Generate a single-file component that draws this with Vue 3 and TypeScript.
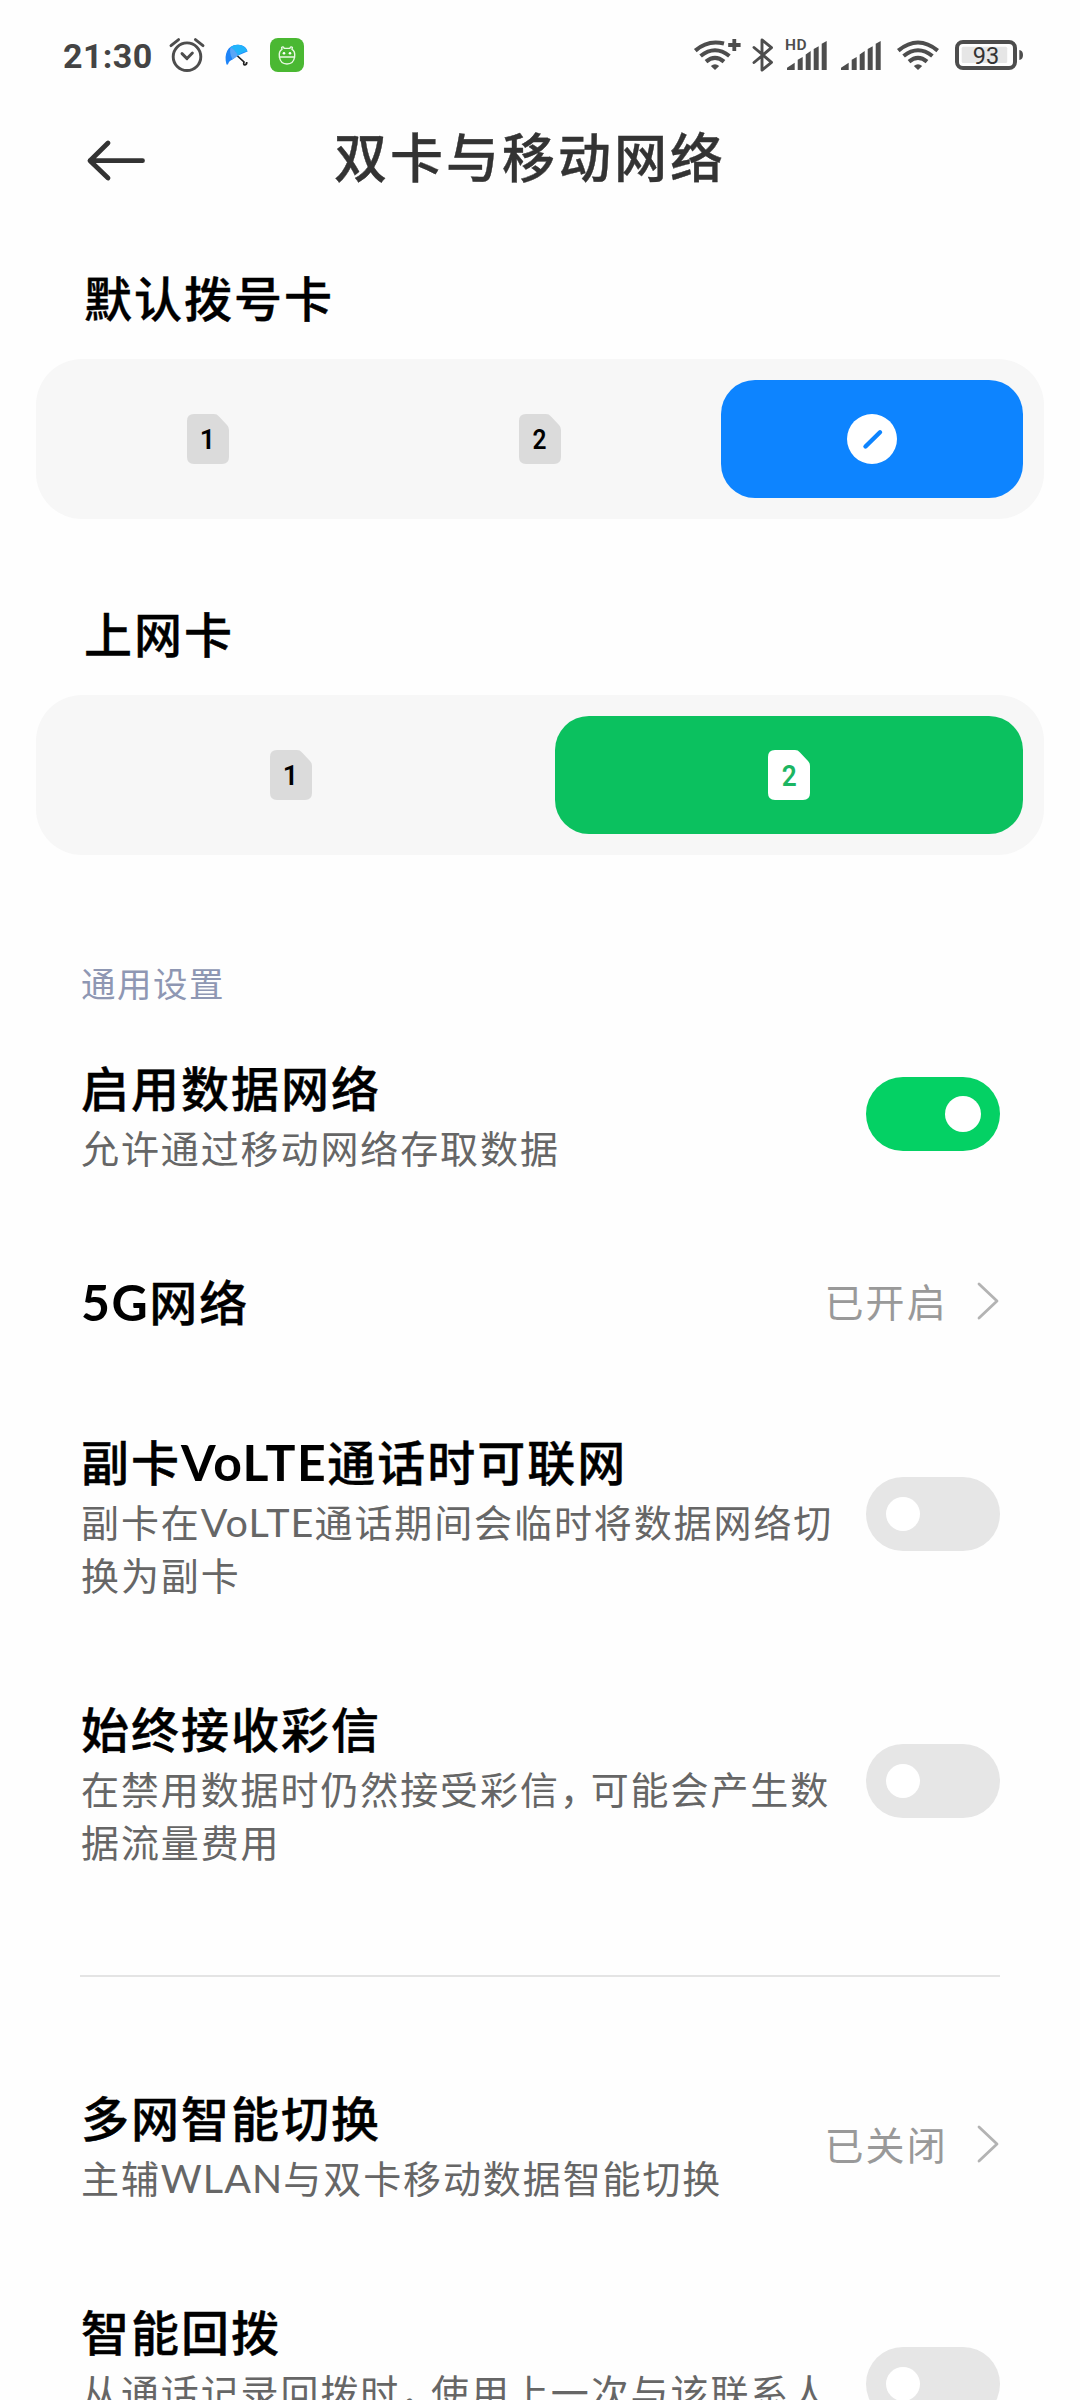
<script setup lang="ts">
import { ref } from 'vue'

interface Row {
  id: string
  title: string
  lines: string[]
  value?: string
  on?: boolean
  tall?: boolean
}

interface Run {
  text: string
  kind: '' | 'latin' | 'comma'
}

const general = ref<Row[]>([
  { id: 'data', title: '启用数据网络', lines: ['允许通过移动网络存取数据'], on: true },
  { id: '5g', title: '5G网络', lines: [], value: '已开启' },
  { id: 'volte', title: '副卡VoLTE通话时可联网', lines: ['副卡在VoLTE通话期间会临时将数据网络切', '换为副卡'], on: false },
  { id: 'mms', title: '始终接收彩信', lines: ['在禁用数据时仍然接受彩信，可能会产生数', '据流量费用'], on: false },
])

const smart = ref<Row[]>([
  { id: 'switch', title: '多网智能切换', lines: ['主辅WLAN与双卡移动数据智能切换'], value: '已关闭' },
  { id: 'callback', title: '智能回拨', lines: ['从通话记录回拨时，使用上一次与该联系人'], on: false, tall: true },
])

const groups = [general, smart]
const simPath = 'M7 0H27Q30 0 32 2.4L40 11Q42 13 42 16V43Q42 50 35 50H7Q0 50 0 43V7Q0 0 7 0Z'
const bars = ['M0 29V26.7L7.7 21.7V29Z', 'M10.7 29V18.7L15.7 16V29Z', 'M18.7 29V13.4L23.7 10V29Z', 'M26.7 29V8L31.7 5.3V29Z', 'M34.7 29V2.7L39.7 0V29Z']

// Splits mixed text so Latin runs and commas can be styled apart from Chinese text.
function runs(text: string): Run[] {
  return text
    .split(/([A-Za-z0-9]+|，)/)
    .filter(Boolean)
    .map((t) => ({ text: t, kind: t === '，' ? 'comma' : /^[A-Za-z0-9]/.test(t) ? 'latin' : '' }))
}

function toggle(row: Row) {
  if (row.on !== undefined) row.on = !row.on
}
</script>

<template>
  <div class="screen">
    <header class="status">
      <span class="clock">21:30</span>
      <svg class="alarm" width="36" height="36" viewBox="0 0 36 36" fill="none" stroke="#4d4d4d" stroke-width="2.9" stroke-linecap="round" stroke-linejoin="round">
        <circle cx="18" cy="19.7" r="13.8" />
        <path d="M13 16.6L18 21.6L23.4 16M2 8.6L9.6 2.6M34 8.6L26.4 2.6" />
      </svg>
      <svg class="umbrella" width="23" height="22" viewBox="0 0 23 22">
        <path d="M1.500 20.500C-1.500 10 3 1 12 .800C18 .500 22 4 22.500 7.500L13 11.500L7.500 15.500Q3.500 17 3 20.500Z" fill="#1e84f8" />
        <path d="M5.500 3.200Q9 .500 14 .800Q20.500 2 22.500 7.500Q19 7 13 11.500Q10 6 5.500 3.200Z" fill="#22b4fb" />
        <path d="M5.500 3.200Q10.500 6 13 11.500L7.500 15.500Q4 9 5.500 3.200Z" fill="#5aa6f6" />
        <path d="M12.500 12L19 18Q18 21 20 20.800Q22 20.500 21.700 18" fill="none" stroke="#222" stroke-width="1.700" />
      </svg>
      <svg class="app" width="34" height="34" viewBox="0 0 34 34">
        <rect width="34" height="34" rx="8" fill="#4ab832" />
        <g fill="none" stroke="#e9f8e4" stroke-width="1.400" stroke-linejoin="round">
          <path d="M9.400 19Q8.600 13 12 11.400L11.600 9.400Q13 8 14.200 10.400H19.800Q21 8 22.400 9.400L22 11.400Q25.400 13 24.600 19Z" />
          <path d="M9.400 19Q10.500 26 17 26Q23.500 26 24.600 19" />
        </g>
        <circle cx="14" cy="15.300" r="1.300" fill="#fff" />
        <circle cx="20" cy="15.300" r="1.300" fill="#fff" />
      </svg>

      <span class="spacer"></span>

      <svg class="wifi-plus" width="48" height="30" viewBox="0 0 48 30" fill="none" stroke="#4d4d4d" stroke-width="4.100">
        <path d="M1.300 10.600Q14 -.500 30 3.600" />
        <path d="M6.600 16Q21 4.500 35.400 16" />
        <path d="M12 21.600Q21 14 30 21.600" />
        <path d="M16.800 26Q21 22.500 25.200 26L21 30Z" fill="#4d4d4d" stroke="none" />
        <path d="M40.300 -1V11M34.200 5H46.600" stroke-width="3.800" />
      </svg>
      <svg class="bt" width="22" height="34" viewBox="0 0 22 34" fill="none" stroke="#4d4d4d" stroke-width="2.900" stroke-linejoin="round" stroke-linecap="round">
        <path d="M2 9.500L19.500 24.300L10 32V2L19.500 9.700L2 24.500" />
      </svg>
      <div class="signal-hd">
        <svg width="40" height="29" viewBox="0 0 40 29" fill="#4d4d4d"><path v-for="b in bars" :key="b" :d="b" /></svg>
        <span class="hd">HD</span>
      </div>
      <svg class="signal" width="40" height="29" viewBox="0 0 40 29" fill="#4d4d4d"><path v-for="b in bars" :key="b" :d="b" /></svg>
      <svg class="wifi" width="42" height="30" viewBox="0 0 42 30" fill="none" stroke="#4d4d4d" stroke-width="4.100">
        <path d="M1.300 10.600Q21 -5.600 40.700 10.600" />
        <path d="M6.600 16Q21 4.500 35.400 16" />
        <path d="M12 21.600Q21 14 30 21.600" />
        <path d="M16.800 26Q21 22.500 25.200 26L21 30Z" fill="#4d4d4d" stroke="none" />
      </svg>
      <svg class="battery" width="68" height="30" viewBox="0 0 68 30">
        <rect x="2" y="2" width="58" height="26" rx="6" fill="#fefefe" stroke="#4d4d4d" stroke-width="4" />
        <rect x="6.700" y="6.700" width="45.500" height="16.300" rx="1.500" fill="#e6e6e6" />
        <path d="M64.300 10Q68 10.500 68 15T64.300 20Z" fill="#4d4d4d" />
        <text x="31" y="23.800" text-anchor="middle" class="percent">93</text>
      </svg>
    </header>

    <div class="titlebar">
      <svg class="back" width="58" height="42" viewBox="0 0 58 42" fill="none" stroke="#333" stroke-width="4.800" stroke-linecap="round" stroke-linejoin="round">
        <path d="M55.500 20.700H3M21 3L3 20.700L21 38" />
      </svg>
      <h1>双卡与移动网络</h1>
    </div>

    <section class="sim-section first">
      <h2>默认拨号卡</h2>
      <div class="segments">
        <button class="segment">
          <svg width="42" height="50" viewBox="0 0 42 50"><path :d="simPath" fill="#dbdbdb" /><text x="20.500" y="34.500" class="digit">1</text></svg>
        </button>
        <button class="segment">
          <svg width="42" height="50" viewBox="0 0 42 50"><path :d="simPath" fill="#dbdbdb" /><text x="20.500" y="34.500" class="digit" textLength="14" lengthAdjust="spacingAndGlyphs">2</text></svg>
        </button>
        <button class="segment blue">
          <svg width="50" height="50" viewBox="0 0 50 50"><circle cx="25" cy="25" r="25" fill="#fff" /><path d="M18.500 32.500L33 18.300" stroke="#0d84ff" stroke-width="4.400" stroke-linecap="round" /></svg>
        </button>
      </div>
    </section>

    <section class="sim-section">
      <h2>上网卡</h2>
      <div class="segments">
        <button class="segment">
          <svg width="42" height="50" viewBox="0 0 42 50"><path :d="simPath" fill="#dbdbdb" /><text x="20.500" y="34.500" class="digit">1</text></svg>
        </button>
        <button class="segment green">
          <svg width="42" height="50" viewBox="0 0 42 50"><path :d="simPath" fill="#fff" /><text x="21.300" y="36" class="digit active" textLength="15" lengthAdjust="spacingAndGlyphs">2</text></svg>
        </button>
      </div>
    </section>

    <div class="label">通用设置</div>

    <div v-for="(group, gi) in groups" :key="gi" class="group">
      <div v-for="row in group.value" :key="row.id" class="row" @click="toggle(row)">
        <div class="text">
          <div class="title"><span v-for="(r, ri) in runs(row.title)" :key="ri" :class="r.kind">{{ r.text }}</span></div>
          <div v-if="row.lines.length" class="desc" :class="{ tall: row.tall }">
            <div v-for="line in row.lines" :key="line"><span v-for="(r, ri) in runs(line)" :key="ri" :class="r.kind">{{ r.text }}</span></div>
          </div>
        </div>
        <template v-if="row.value">
          <span class="value">{{ row.value }}</span>
          <svg class="chevron" width="22" height="38" viewBox="0 0 22 38" fill="none" stroke="#b3b3b3" stroke-width="2.800" stroke-linecap="round" stroke-linejoin="round"><path d="M2 2L20 19L2 36" /></svg>
        </template>
        <span v-else class="switch" :class="{ on: row.on }"><i></i></span>
      </div>
    </div>
  </div>
</template>

<style>
body {
  background: #fefefe;
}
</style>

<style scoped>
.screen {
  width: 1080px;
  height: 2400px;
  overflow: hidden;
  background: #fefefe;
  color: #000;
  font-family: "Noto Sans CJK SC", sans-serif;
}
h1, h2 {
  margin: 0;
}
h1, h2, .title {
  -webkit-text-stroke: 0.4px currentColor;
}
svg {
  display: block;
  flex: none;
  overflow: visible;
}
.status {
  display: flex;
  align-items: center;
  height: 110px;
  padding: 0 57px 0 63px;
  box-sizing: border-box;
}
.clock {
  width: 106px;
  padding-top: 2px;
  font: 700 34px/40px Roboto, sans-serif;
  letter-spacing: 0.4px;
  color: #444;
}
.umbrella {
  margin-left: 20px;
}
.app {
  margin-left: 22px;
}
.spacer {
  flex: 1;
}
.bt {
  margin-left: 10px;
}
.signal-hd {
  position: relative;
  margin-left: 13px;
}
.hd {
  position: absolute;
  left: -2px;
  top: -3px;
  font: 600 15.500px/15px Roboto, sans-serif;
  letter-spacing: 0.6px;
  color: #4d4d4d;
}
.signal {
  margin-left: 14px;
}
.wifi {
  margin-left: 16px;
}
.battery {
  margin-left: 16px;
}
.percent {
  font: 400 23.500px Roboto, sans-serif;
  fill: #333;
}
.titlebar {
  display: flex;
  align-items: center;
  height: 101px;
  padding-left: 87px;
}
h1 {
  margin: -11px 0 0 189px;
  font-size: 53px;
  font-weight: 500;
  line-height: 80px;
  letter-spacing: 3px;
  color: #333;
}
.sim-section {
  margin: 83px 36px 0;
}
.sim-section.first {
  margin-top: 55px;
}
h2 {
  padding-left: 48px;
  font-size: 48px;
  font-weight: 500;
  line-height: 60px;
  letter-spacing: 2px;
}
.segments {
  display: flex;
  gap: 30px;
  margin-top: 33px;
  padding: 21px;
  border-radius: 46px;
  background: #f7f7f7;
}
.segment {
  flex: 1;
  display: flex;
  align-items: center;
  justify-content: center;
  height: 118px;
  padding: 0;
  border: 0;
  border-radius: 34px;
  background: none;
}
.blue {
  background: #0d84ff;
}
.green {
  background: #0bc15f;
}
.digit {
  font: 600 27px Roboto, sans-serif;
  text-anchor: middle;
}
.digit.active {
  font-size: 29px;
  fill: #1cb562;
}
.label {
  margin: 103px 0 0 81px;
  font-size: 34.500px;
  line-height: 48px;
  letter-spacing: 1.500px;
  color: #8e97b3;
}
.group + .group {
  margin: 62px 80px 0;
  padding-top: 59px;
  border-top: 2px solid #e4e4e4;
}
.group {
  margin: 0 80px;
}
.row {
  display: flex;
  align-items: center;
  padding: 46.250px 0;
}
.text {
  flex: 1;
  padding-left: 1px;
  white-space: nowrap;
}
.title {
  font-size: 48px;
  font-weight: 500;
  line-height: 68px;
  letter-spacing: 2px;
}
.desc {
  font-size: 38px;
  line-height: 53px;
  letter-spacing: 1.900px;
  color: #666;
}
.tall {
  min-height: 106px;
}
.latin {
  font-family: Lato, sans-serif;
  font-size: 1.040em;
  line-height: 1;
}
.title .latin {
  font-weight: 700;
  letter-spacing: 1.500px;
  -webkit-text-stroke: 0;
}
.desc .latin {
  letter-spacing: 1.100px;
}
.comma {
  margin: 0 10px 0 0;
  font-feature-settings: "halt";
}
.value {
  font-size: 39px;
  line-height: 53px;
  letter-spacing: 2.200px;
  margin-top: 2px;
  color: #999;
}
.chevron {
  margin: 3px 1px 0 29px;
}
.switch {
  display: flex;
  align-items: center;
  flex: none;
  width: 134px;
  height: 74px;
  box-sizing: border-box;
  margin-top: 2px;
  padding: 0 20px;
  border-radius: 37px;
  background: #e6e6e6;
}
.switch i {
  width: 34px;
  height: 34px;
  border-radius: 50%;
  background: #fff;
}
.switch.on {
  justify-content: flex-end;
  padding-right: 19px;
  background: #04d164;
}
.switch.on i {
  width: 36px;
  height: 36px;
}
</style>
